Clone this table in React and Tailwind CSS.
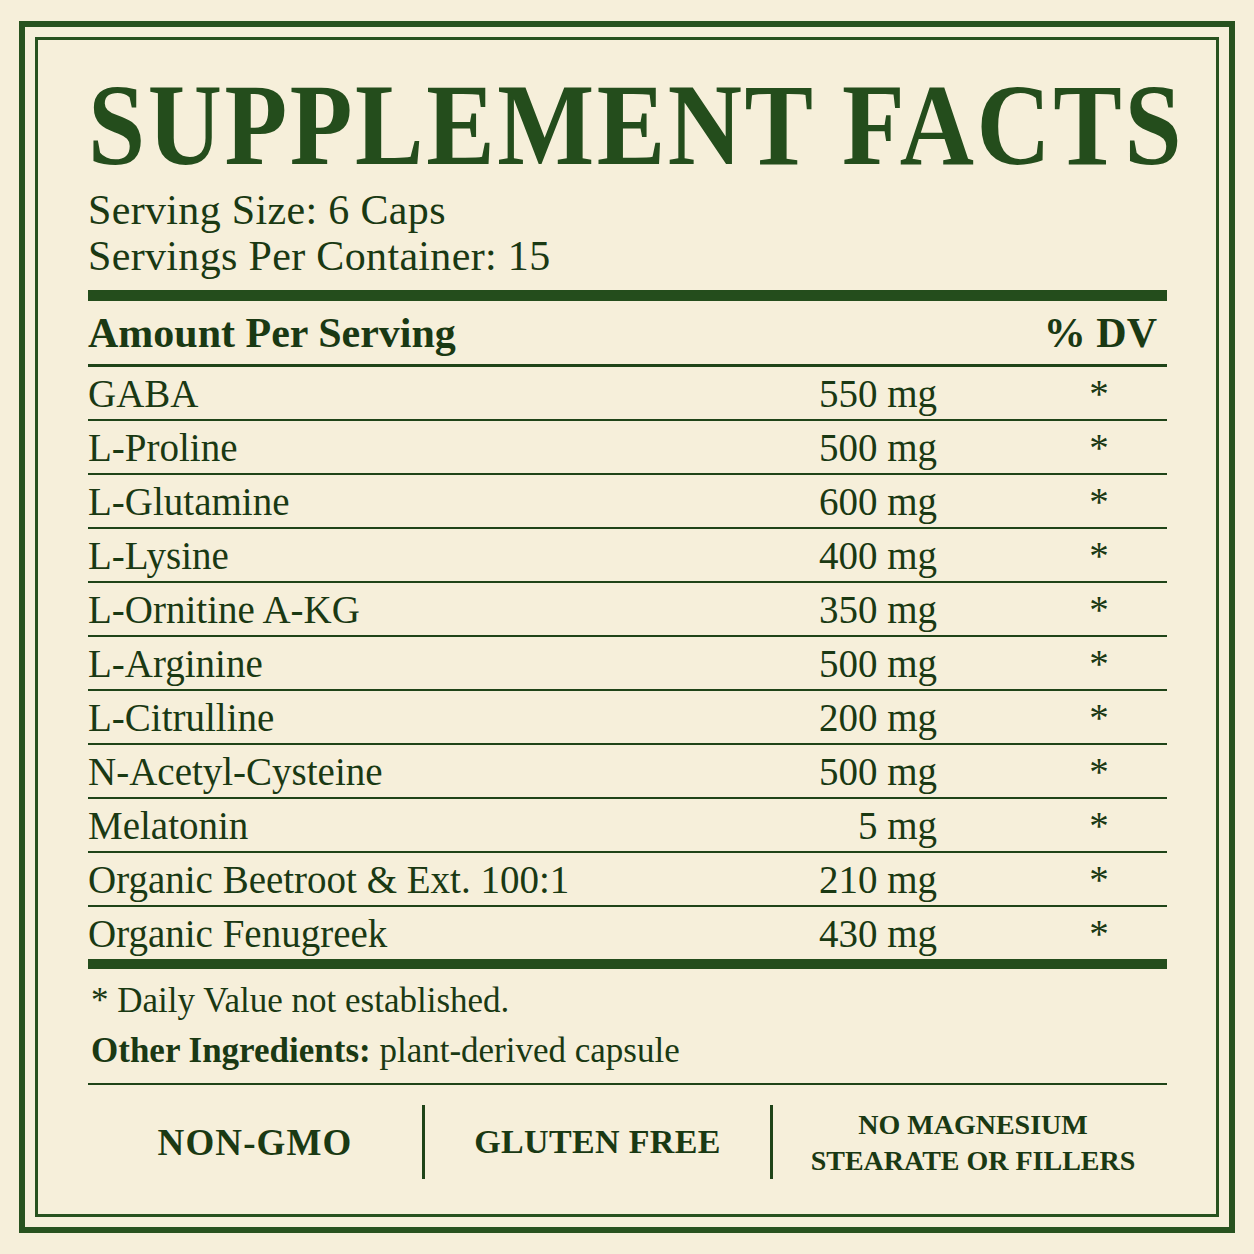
import React from 'react';

const ROWS = [
  ['GABA', '550 mg'],
  ['L-Proline', '500 mg'],
  ['L-Glutamine', '600 mg'],
  ['L-Lysine', '400 mg'],
  ['L-Ornitine A-KG', '350 mg'],
  ['L-Arginine', '500 mg'],
  ['L-Citrulline', '200 mg'],
  ['N-Acetyl-Cysteine', '500 mg'],
  ['Melatonin', '5 mg'],
  ['Organic Beetroot & Ext. 100:1', '210 mg'],
  ['Organic Fenugreek', '430 mg'],
];

const serif = "font-['Liberation_Serif','Times_New_Roman',serif]";

const App = () => {
  return (
    <div className={`w-[1254px] h-[1254px] bg-[#f6efda] pt-[21px] pb-[21px] px-[19px] text-[#1a3913] ${serif}`}>
      <div className="h-full border-[6px] border-[#28521f] p-[10px]">
        <div className="h-full border-[3px] border-[#28521f] pl-[50px] pr-[49px] pt-[26px] flex flex-col">
          <h1 className="text-[117px] leading-none font-bold text-[#244d1c] tracking-[0.025em] whitespace-nowrap origin-left scale-x-[0.878]">
            SUPPLEMENT FACTS
          </h1>
          <div className="mt-[4px] text-[42px] leading-[46px] tracking-[0.008em]">
            <div>Serving Size: 6 Caps</div>
            <div>Servings Per Container: 15</div>
          </div>
          <div className="mt-[11px] h-[11px] bg-[#244d1c]" />
          <div className="h-[66px] flex items-center justify-between font-bold text-[42px] leading-none border-b-[3px] border-[#1f4418]">
            <span>Amount Per Serving</span>
            <span className="pr-[10px]">% DV</span>
          </div>
          {ROWS.map(([name, amt], i) => (
            <div
              key={name}
              className={`flex items-center text-[39px] leading-none ${i < ROWS.length - 1 ? 'h-[54px] border-b-2 border-[#1f4418]' : 'h-[52px]'}`}
            >
              <span className="flex-1">{name}</span>
              <span className="w-[220px] text-right">{amt}</span>
              <span className="w-[136px] ml-[94px] text-center">*</span>
            </div>
          ))}
          <div className="h-[10px] bg-[#244d1c]" />
          <div className="mt-[12px] text-[35px] leading-[40px] pl-[3px]">* Daily Value not established.</div>
          <div className="mt-[10px] text-[35px] leading-[40px] pl-[3px]">
            <span className="font-bold">Other Ingredients:</span> plant-derived capsule
          </div>
          <div className="mt-[12px] h-[2px] bg-[#1f4418]" />
          <div className="mt-[20px] flex items-stretch h-[74px] font-bold">
            <div className="w-[334px] flex items-center justify-center text-[37px] leading-none tracking-[0.03em]">NON-GMO</div>
            <div className="w-[3px] bg-[#1f4418]" />
            <div className="w-[345px] flex items-center justify-center text-[34px] leading-none tracking-[0.01em]">GLUTEN FREE</div>
            <div className="w-[3px] bg-[#1f4418]" />
            <div className="flex-1 flex flex-col items-center justify-center text-[28px] leading-[36px] pt-[2px] pl-[6px]">
              <span>NO MAGNESIUM</span>
              <span>STEARATE OR FILLERS</span>
            </div>
          </div>
        </div>
      </div>
    </div>
  );
};

export default App;
